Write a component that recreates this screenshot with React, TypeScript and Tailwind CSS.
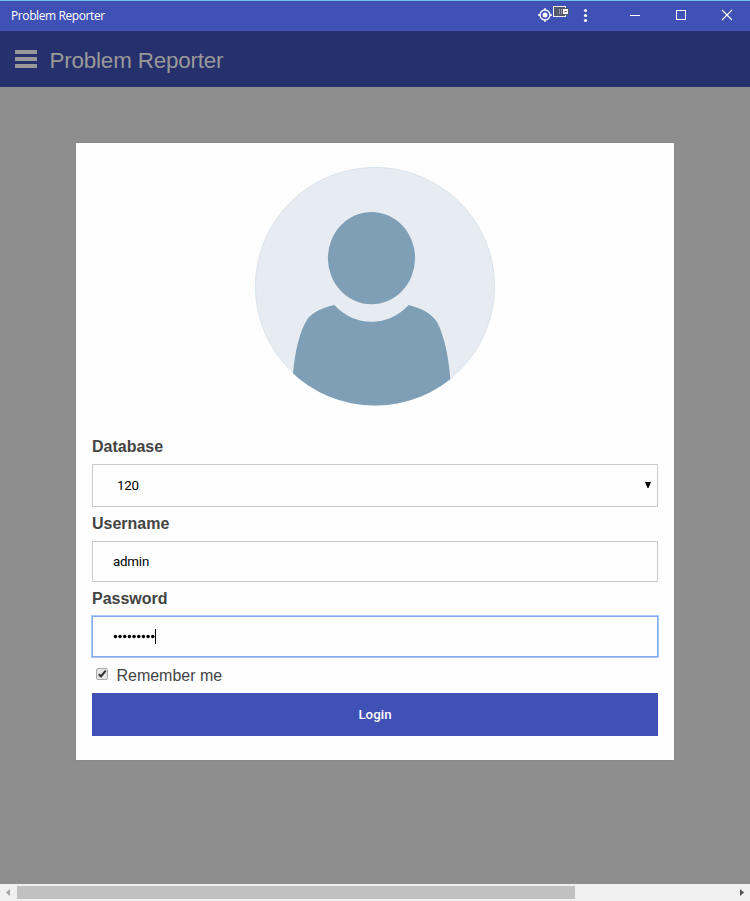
function TitleBar() {
  return (
    <header className="flex h-[31px] items-center border-t border-[#6cc5e8] bg-[#3f51b5] pl-[11px] text-white">
      <span className="grow whitespace-nowrap font-['Open_Sans',sans-serif] text-[12px] leading-[16px] tracking-[-0.4px]">
        Problem Reporter
      </span>
      <svg width="213" height="30" viewBox="537 1 213 30" fill="none" aria-hidden="true">
        <circle cx="545" cy="15" r="5" stroke="#fff" strokeWidth="1.3" />
        <circle cx="545" cy="15" r="2.5" fill="#fff" />
        <path d="M545 8v2M545 20v2M538 15h2M550 15h2" stroke="#fff" strokeWidth="1.3" />
        <rect x="553.5" y="6.5" width="12" height="10" fill="#54576a" stroke="#eee" />
        <path d="M559.5 9v5M561.5 9v5" stroke="#929ab8" />
        <rect x="562" y="8" width="7" height="7" fill="#54576a" />
        <rect x="563" y="9" width="5" height="5" fill="#fff" />
        <path d="M564.5 11.5h2" stroke="#54576a" />
        <circle cx="585.5" cy="10.5" r="1.6" fill="#fff" />
        <circle cx="585.5" cy="15.5" r="1.6" fill="#fff" />
        <circle cx="585.5" cy="20.5" r="1.6" fill="#fff" />
        <path d="M630 15.5h10" stroke="#fff" />
        <rect x="676.5" y="10.5" width="9" height="9" stroke="#fff" />
        <path d="M722 10l10 10M732 10l-10 10" stroke="#fff" strokeWidth="1.1" />
      </svg>
    </header>
  );
}

function Toolbar() {
  return (
    <div className="flex h-14 items-center bg-[#26306d] pl-[15px] text-[#999]">
      <svg width="22" height="18" viewBox="0 0 22 18" fill="#999" aria-hidden="true">
        <rect width="22" height="4" rx=".6" />
        <rect y="7" width="22" height="4" rx=".6" />
        <rect y="14" width="22" height="4" rx=".6" />
      </svg>
      <h1 className="ml-[12.5px] mt-[3px] text-[22.4px] leading-7 tracking-[-0.18px]">Problem Reporter</h1>
    </div>
  );
}

function Avatar() {
  return (
    <svg className="mx-auto block" width="240" height="240" viewBox="255 167 240 240" aria-hidden="true">
      <defs>
        <clipPath id="disc">
          <ellipse cx="375" cy="286.3" rx="120" ry="119.3" />
        </clipPath>
      </defs>
      <ellipse cx="375" cy="286.3" rx="119.6" ry="118.9" fill="#e7ecf3" stroke="#d3dfe8" strokeWidth=".8" />
      <g fill="#7e9fb6">
        <ellipse cx="371.5" cy="258.2" rx="43.6" ry="46.1" />
        <path
          clipPath="url(#disc)"
          d="M334.3 305Q350 321.700 371.500 321.700Q393 321.700 408.700 305C420 307.800 432 313.500 437 322C444.500 336 449 358 450.400 380V410H293V373C295 352 299.500 331 307.500 319C312.500 312 323.500 307.500 334.300 305Z"
        />
      </g>
    </svg>
  );
}

const label = "flex h-[34px] items-center text-[16px] font-bold text-[#444]";
const field = "flex items-center border font-['Roboto',sans-serif] text-[13.33px] tracking-[-0.2px] text-black";

function LoginCard() {
  return (
    <main className="mx-[76px] mt-14 h-[617px] bg-[#fefefe] px-4 pt-6 shadow-[0_0_1px_#777]">
      <Avatar />
      <div className="mt-[23px]">
        <div className={label}>Database</div>
        <div className={`${field} h-[43px] justify-between border-[#ccc] pl-6 pr-[6px]`}>
          <span>120</span>
          <svg className="mb-[2px]" width="6" height="6" viewBox="0 0 6 6" aria-hidden="true">
            <path d="M0 0h6L3.500 6h-1z" />
          </svg>
        </div>
        <div className={label}>Username</div>
        <div className={`${field} h-[41px] border-[#ccc] pl-5`}>admin</div>
        <div className={label}>Password</div>
        <div className={`${field} h-[41px] border-[#83a9e8] pl-5 shadow-[0_0_0_1px_#a9c9fa]`}>
          <svg className="mb-px" width="43" height="16" viewBox="0 0 43 16" aria-hidden="true">
            {Array.from({ length: 9 }, (_, i) => (
              <circle key={i} cx={2.4 + i * 4.67} cy="8.500" r="1.750" />
            ))}
            <path d="M42 1h1v15h-1z" />
          </svg>
        </div>
        <div className="flex h-9 items-center pl-1 text-[16px] text-[#444]">
          <svg className="mb-[2px]" width="12" height="12" viewBox="0 0 12 12" aria-hidden="true">
            <rect x=".5" y=".5" width="11" height="11" rx="1.500" fill="#e6e6e6" stroke="#aaa" />
            <path d="M2.800 6.200L5 8.400L9.700 2.600" fill="none" stroke="#393939" strokeWidth="2.200" />
          </svg>
          <span className="ml-[8.5px] mt-[2px] tracking-[-0.02px]">Remember me</span>
        </div>
        <button className="block h-[43px] w-full bg-[#3f51b5] font-['Roboto',sans-serif] text-[13.33px] font-medium text-white">
          Login
        </button>
      </div>
    </main>
  );
}

function ScrollBar() {
  return (
    <div className="flex h-[17px] items-center bg-[#f0f0f0]">
      <svg width="17" height="17" viewBox="0 0 17 17" aria-hidden="true">
        <path d="M10 5v7L6 8.500z" fill="#a3a3a3" />
      </svg>
      <div className="h-[13px] w-[558px] bg-[#c1c1c1]" />
      <svg className="ml-auto" width="17" height="17" viewBox="0 0 17 17" aria-hidden="true">
        <path d="M7 5v7l4-3.500z" fill="#505050" />
      </svg>
    </div>
  );
}

export default function App() {
  return (
    <div className="flex h-[901px] w-[750px] flex-col overflow-hidden bg-[#8e8e8e] font-['Liberation_Sans',Arial,sans-serif]">
      <TitleBar />
      <Toolbar />
      <div className="grow">
        <LoginCard />
      </div>
      <ScrollBar />
    </div>
  );
}
